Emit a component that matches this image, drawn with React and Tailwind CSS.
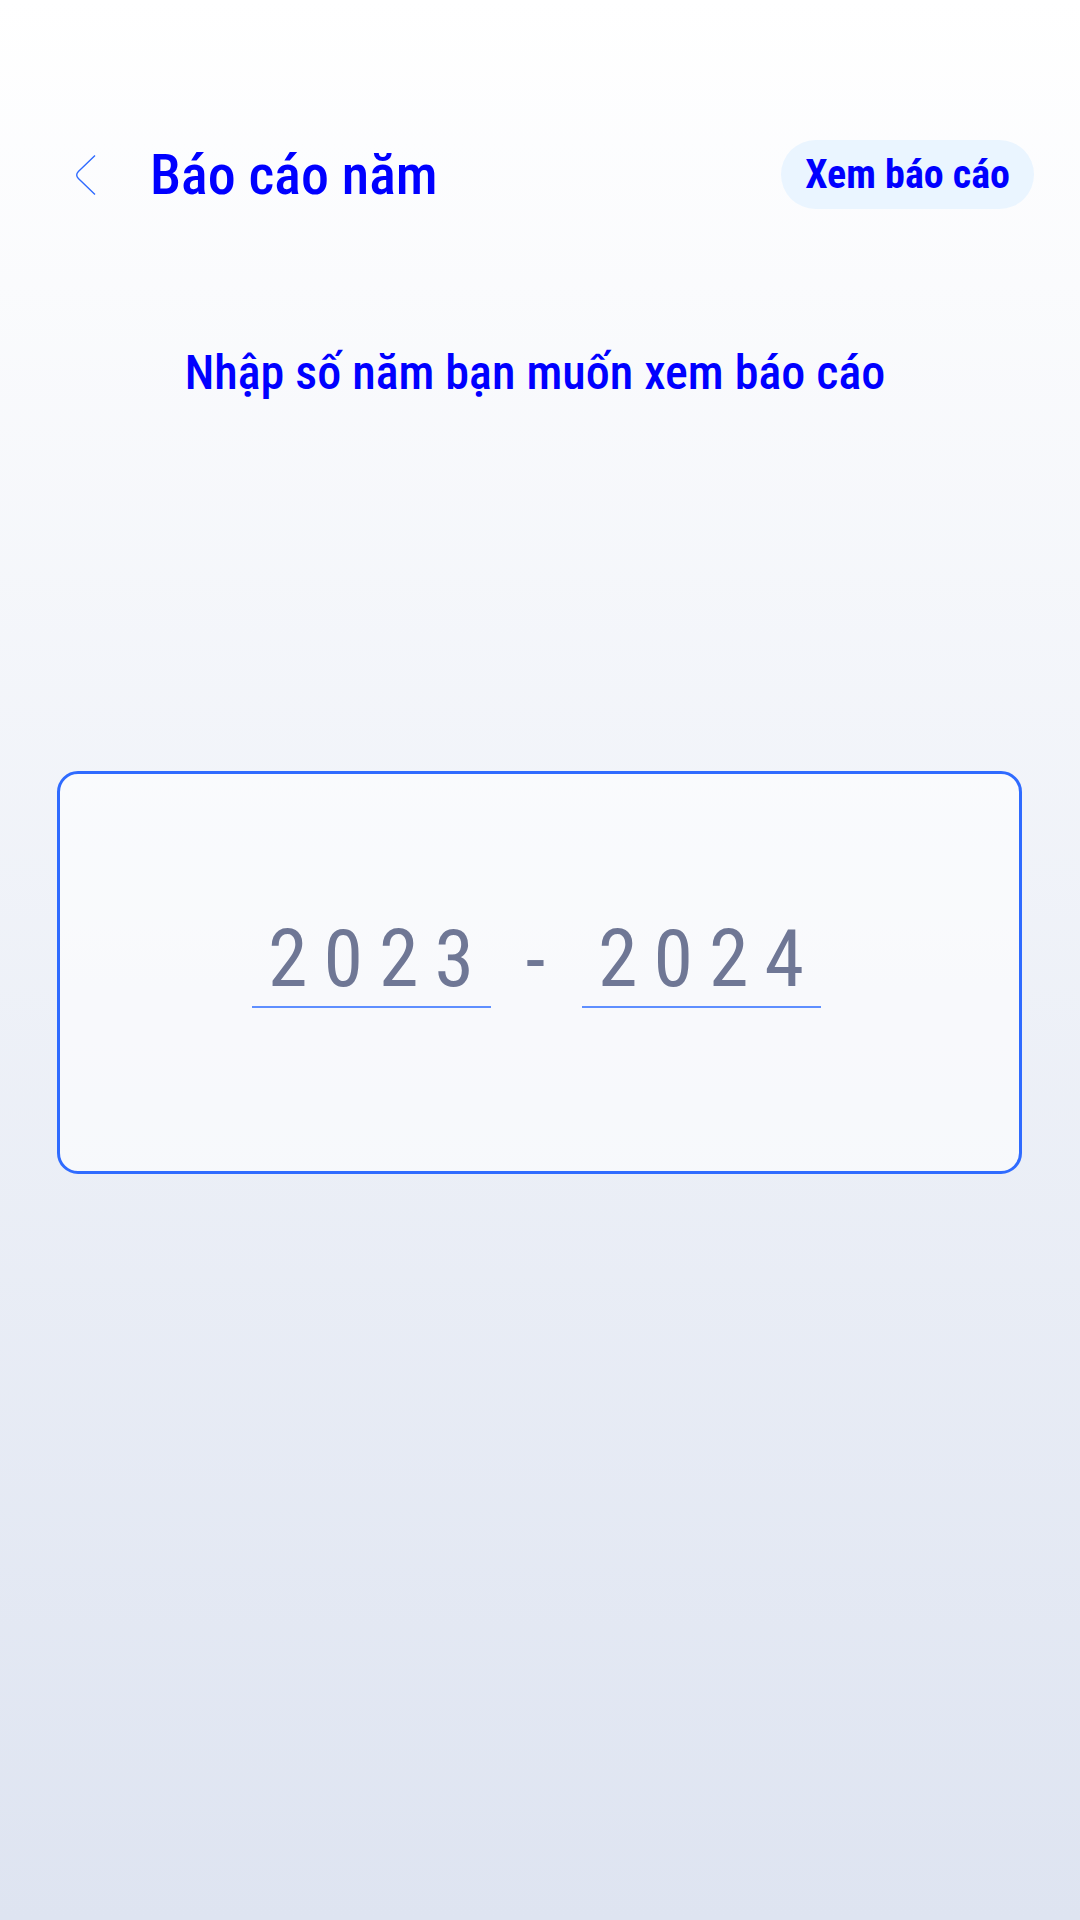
function YearInput({ label, value }) {
  return (
    <input
      type="text"
      inputMode="numeric"
      maxLength={4}
      aria-label={label}
      placeholder={value}
      className="h-24 w-[239px] border-b-2 border-[#5f8fff] bg-transparent pl-4 text-[80px] tracking-[16px] text-[#6f7795] placeholder:text-[#6f7795] placeholder:opacity-100 outline-none"
    />
  );
}

export default function App() {
  return (
    <main className="flex min-h-screen flex-col bg-linear-to-b from-white to-[#dee4f1] font-['Roboto_Condensed',Roboto,sans-serif] text-[#0000ff]">
      <header className="mt-[140px] flex items-center justify-between pr-[46px] pl-[76px]">
        <div className="flex items-center gap-[54px]">
          <button type="button" aria-label="Quay lại" className="w-5">
            <svg viewBox="0 0 20 40" className="h-10 w-5 fill-none stroke-[#2f6bff]" strokeWidth="1.4">
              <path d="M19 0.5 2.4 16.6Q-1 20 2.4 23.4L19 39.5" />
            </svg>
          </button>
          <h1 className="text-[56px] leading-[68px] font-medium">Báo cáo năm</h1>
        </div>
        <button type="button" className="rounded-full bg-[#eaf5ff] px-6 text-[40px] leading-[69px] font-bold">
          Xem báo cáo
        </button>
      </header>

      <h2 className="mt-[135px] pr-[10px] text-center text-5xl leading-[58px] font-medium">
        Nhập số năm bạn muốn xem báo cáo
      </h2>

      <form className="mr-[58px] ml-[57px] mt-[369px] flex h-[403px] items-center justify-center rounded-[21px] border-3 border-[#2f6bff] bg-white/60 pr-[6px] pb-[25px]">
        <YearInput label="Năm bắt đầu" value="2023" />
        <span className="w-[91px] pr-0.5 text-center text-[80px] leading-[96px] text-[#6f7795]">-</span>
        <YearInput label="Năm kết thúc" value="2024" />
      </form>
    </main>
  );
}
